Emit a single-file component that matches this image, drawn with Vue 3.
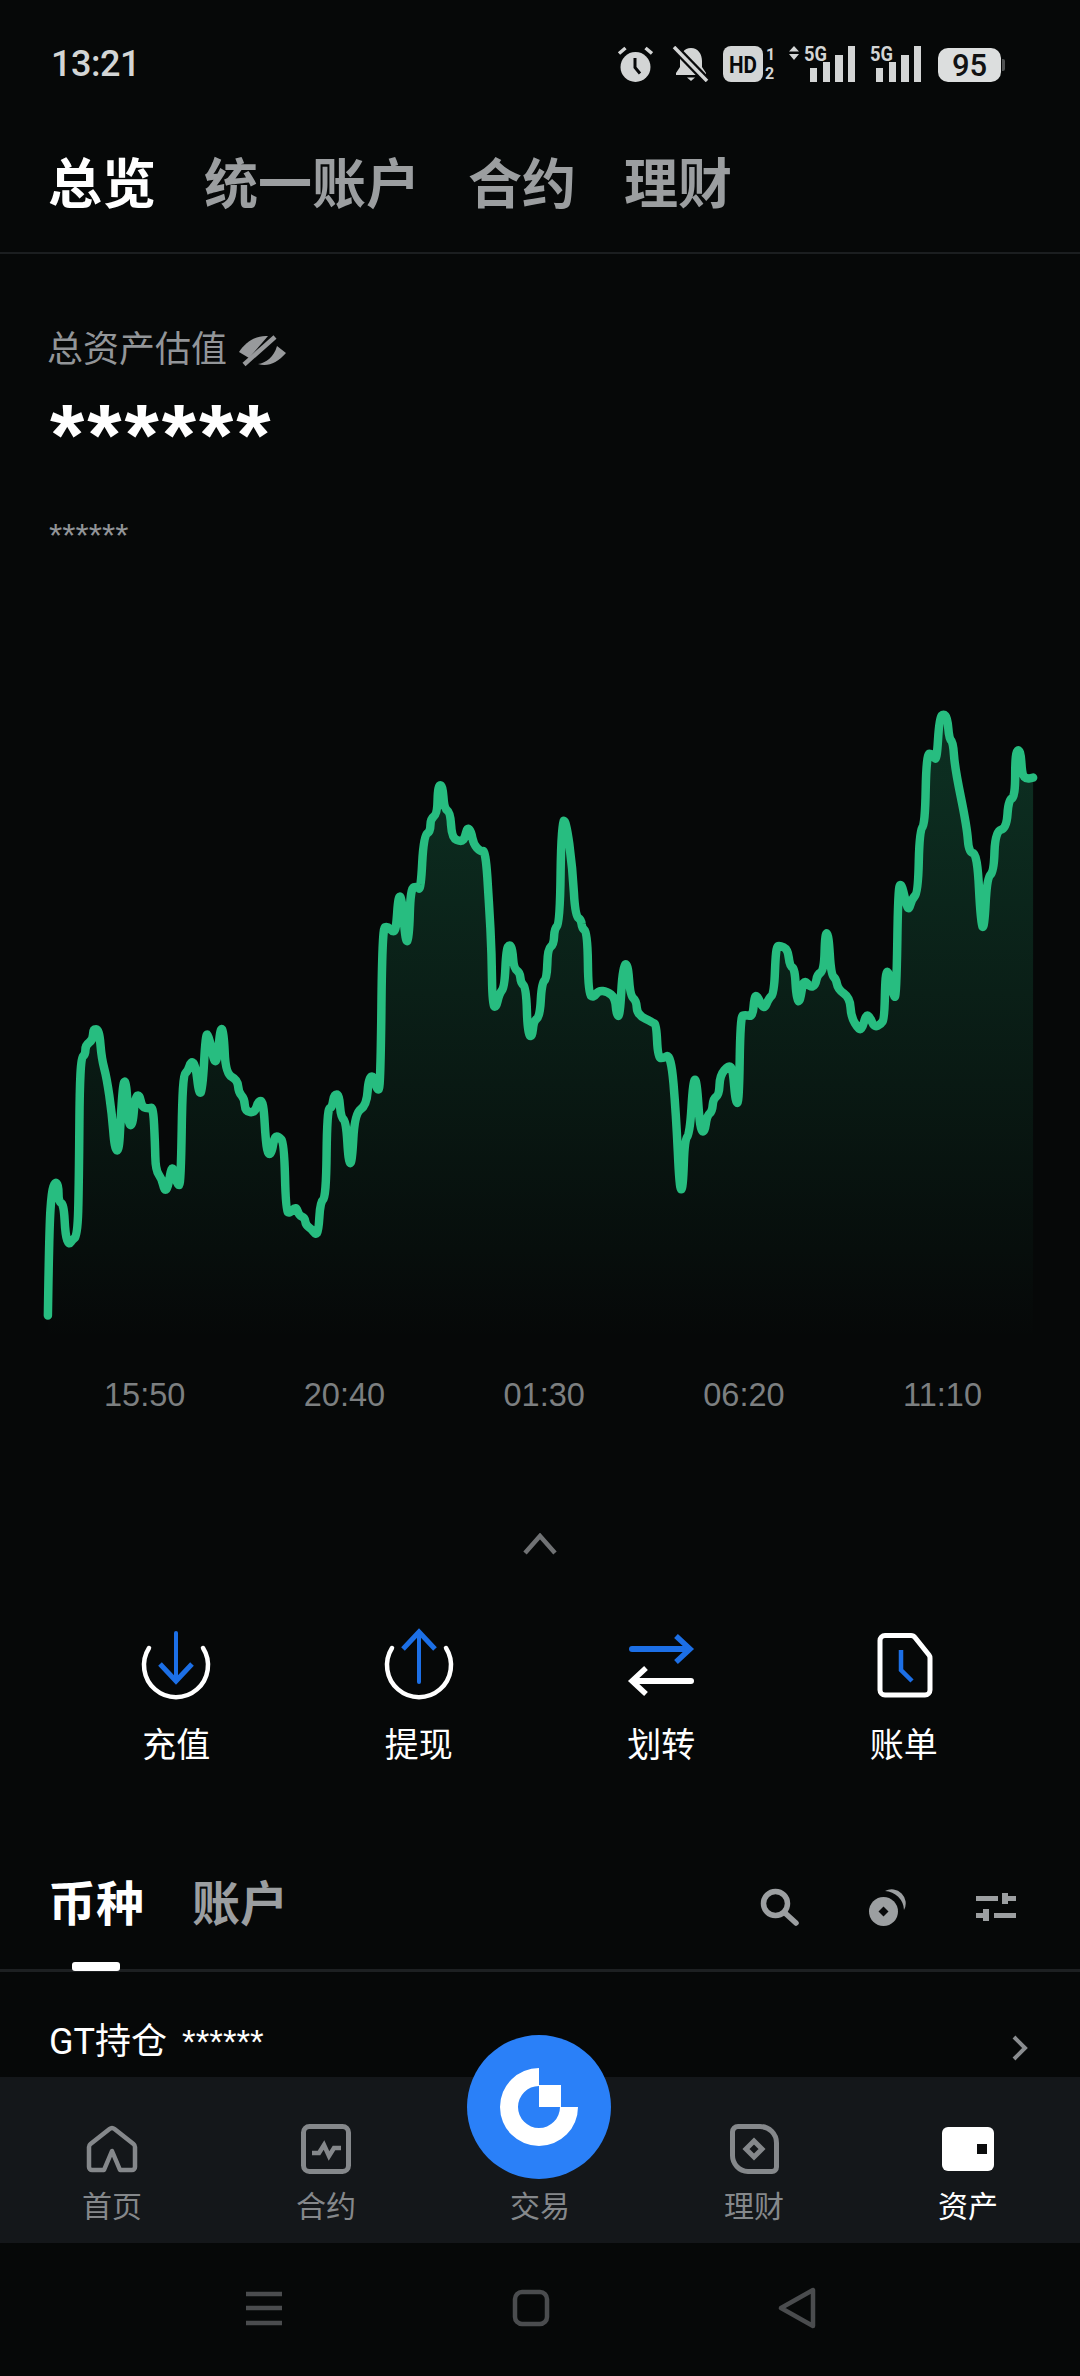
<template>
  <div class="page">
    <div class="content">
      <div class="status-bar">
        <span class="time">13:21</span>
        <div class="status-icons">
          <svg width="36" height="36" viewBox="0 0 36 36">
            <circle cx="18.500" cy="21" r="15" fill="#d3d5d5" />
            <path d="M2 7.500 8.500 2M35 7.500 28.500 2" stroke="#d3d5d5" stroke-width="3.500" />
            <path d="M18 12v9.500l5 6" fill="none" stroke="#08090a" stroke-width="3" />
          </svg>
          <svg width="42" height="36" viewBox="0 0 42 36">
            <path d="M24 2c7 0 11 6 11 13v6l4 6v2H9v-2l4-6v-6c0-7 4-13 11-13z" fill="#d3d5d5" />
            <path d="M20 31.500h8l-4 3.500z" fill="#d3d5d5" />
            <path d="M7 1l33 34" stroke="#08090a" stroke-width="8" />
            <path d="M7 1l33 34" stroke="#d3d5d5" stroke-width="3.500" />
          </svg>
          <svg width="52" height="36" viewBox="0 0 52 36">
            <rect width="40" height="36" rx="8" fill="#d3d5d5" />
            <text x="6" y="27" class="hd" textLength="28" lengthAdjust="spacingAndGlyphs">HD</text>
            <text x="43" y="14" class="sim-no">1</text>
            <text x="42" y="33" class="sim-no">2</text>
          </svg>
          <svg width="67" height="40" viewBox="0 -4 67 40" fill="#d3d5d5">
            <path d="M5 0l5 5.500H0zM5 14l5-6H0z" />
            <text x="15" y="15" class="five-g" textLength="23" lengthAdjust="spacingAndGlyphs">5G</text>
            <rect x="21" y="22" width="7" height="14" />
            <rect x="34" y="16" width="7" height="20" />
            <rect x="46" y="9" width="8" height="27" />
            <rect x="59" width="7" height="36" />
          </svg>
          <svg width="52" height="40" viewBox="0 -4 52 40" fill="#d3d5d5">
            <text x="0" y="15" class="five-g" textLength="23" lengthAdjust="spacingAndGlyphs">5G</text>
            <rect x="6" y="22" width="7" height="14" />
            <rect x="19" y="16" width="7" height="20" />
            <rect x="31" y="9" width="8" height="27" />
            <rect x="44" width="7" height="36" />
          </svg>
          <div class="battery">95</div>
        </div>
      </div>

      <div class="top-tabs">
        <span v-for="(tab, i) in topTabs" :key="tab" class="top-tab" :class="{ active: i === 0 }">{{ tab }}</span>
      </div>

      <div class="summary">
        <div class="summary-label">
          <span>总资产估值</span>
          <svg width="64" height="50" viewBox="0 0 64 50" fill="#989a9c">
            <path d="M9 27C16 16 27 10 38 11L19 33z" />
            <path d="M47 21l9 7c-9 10-18 14-28 11 8-1 16-7 19-18z" />
            <path d="M14 39.500 45 12" stroke="#989a9c" stroke-width="4.500" />
          </svg>
        </div>
        <div class="summary-value">******</div>
        <div class="summary-sub">******</div>
      </div>

      <svg class="chart" width="1080" height="640" viewBox="0 700 1080 640">
        <defs>
          <linearGradient id="chartFill" gradientUnits="userSpaceOnUse" x1="0" y1="780" x2="0" y2="1340">
            <stop offset="0" stop-color="#26c281" stop-opacity="0.2" />
            <stop offset="1" stop-color="#26c281" stop-opacity="0" />
          </linearGradient>
        </defs>
        <path :d="areaPath" fill="url(#chartFill)" />
        <path :d="linePath" fill="none" stroke="#27bd80" stroke-width="8.500" stroke-linecap="round" stroke-linejoin="round" />
      </svg>

      <div class="chart-times">
        <span v-for="t in times" :key="t">{{ t }}</span>
      </div>

      <div class="collapse">
        <svg width="36" height="22" viewBox="0 0 36 22">
          <path d="M3 20 18 3l15 17" fill="none" stroke="#707274" stroke-width="4.500" />
        </svg>
      </div>

      <div class="actions">
        <div class="action">
          <svg width="80" height="80" viewBox="0 0 80 80">
            <path d="M13 23A32 32 0 1 0 67 23" fill="none" stroke="#fff" stroke-width="4.500" stroke-linecap="round" />
            <path d="M40 8v48" stroke="#1c6fe6" stroke-width="4" stroke-linecap="round" />
            <path d="M24 39l16 17 16-17" fill="none" stroke="#1c6fe6" stroke-width="5" />
          </svg>
          <span>充值</span>
        </div>
        <div class="action">
          <svg width="80" height="80" viewBox="0 0 80 80">
            <path d="M13 23A32 32 0 1 0 67 23" fill="none" stroke="#fff" stroke-width="4.500" stroke-linecap="round" />
            <path d="M40 8v49" stroke="#1c6fe6" stroke-width="4" stroke-linecap="round" />
            <path d="M24 24 40 7l16 17" fill="none" stroke="#1c6fe6" stroke-width="5" />
          </svg>
          <span>提现</span>
        </div>
        <div class="action">
          <svg width="80" height="80" viewBox="0 0 80 80">
            <path d="M11 24h56" stroke="#1c6fe6" stroke-width="6" stroke-linecap="round" />
            <path d="M55 11l14 13-14 13" fill="none" stroke="#1c6fe6" stroke-width="5.500" />
            <path d="M70 56H14" stroke="#fff" stroke-width="6" stroke-linecap="round" />
            <path d="M25 43 11 56l14 13" fill="none" stroke="#fff" stroke-width="5.500" />
          </svg>
          <span>划转</span>
        </div>
        <div class="action">
          <svg width="80" height="80" viewBox="0 0 80 80">
            <path d="M21 10.500H47a5 5 0 0 1 4 2L65 30a5 5 0 0 1 1 3V65a5 5 0 0 1-5 5H21a5 5 0 0 1-5-5V15.500a5 5 0 0 1 5-5z" fill="none" stroke="#fff" stroke-width="5" />
            <path d="M37 25v20l11 11" fill="none" stroke="#1c6fe6" stroke-width="4.500" />
          </svg>
          <span>账单</span>
        </div>
      </div>

      <div class="asset-bar">
        <div class="asset-tabs">
          <span class="asset-tab active">币种</span>
          <span class="asset-tab">账户</span>
        </div>
        <div class="asset-tools">
          <svg width="42" height="42" viewBox="0 0 42 42">
            <circle cx="16.500" cy="15.500" r="12" fill="none" stroke="#9c9fa1" stroke-width="5.500" />
            <path d="M26 25l11 10" stroke="#9c9fa1" stroke-width="5.500" stroke-linecap="round" />
          </svg>
          <svg width="42" height="42" viewBox="0 0 42 42">
            <path d="M18 3A14 14 0 0 1 37 22 20 20 0 0 0 18 3z" fill="#9c9fa1" />
            <circle cx="16.500" cy="23.500" r="14.500" fill="#9c9fa1" />
            <path d="M16.500 18.500l5 5-5 5-5-5z" fill="#08090a" />
          </svg>
          <svg width="42" height="42" viewBox="0 0 42 42" fill="#9c9fa1">
            <rect x="1" y="8" width="22" height="5" />
            <rect x="27" y="5" width="6" height="11" />
            <rect x="33" y="8" width="8" height="5" />
            <rect x="1" y="25" width="7" height="5" />
            <rect x="8" y="21" width="6" height="12" />
            <rect x="19" y="25" width="22" height="5" />
          </svg>
        </div>
      </div>

      <div class="holding">
        <span>GT持仓</span>
        <span class="holding-value">******</span>
        <svg class="holding-arrow" width="20" height="28" viewBox="0 0 20 28">
          <path d="M4 3l11 11L4 25" fill="none" stroke="#8a8d90" stroke-width="4" />
        </svg>
      </div>
    </div>

    <div class="tab-bar">
      <div class="trade-button">
        <svg width="144" height="144" viewBox="0 0 144 144">
          <path d="M72 33A39 39 0 1 0 111 72H93A21 21 0 1 1 72 51z" fill="#fff" />
          <rect x="72" y="50" width="22" height="22" fill="#fff" />
        </svg>
      </div>
      <div class="tab-item">
        <svg width="60" height="52" viewBox="0 0 60 52">
          <path d="M22 47H10a3 3 0 0 1-3-3V24a4 4 0 0 1 1.500-3l19-15a4 4 0 0 1 5 0l19 15a4 4 0 0 1 1.500 3v20a3 3 0 0 1-3 3H38l-8-19z" fill="none" stroke="#85888b" stroke-width="4.500" stroke-linejoin="round" />
        </svg>
        <span>首页</span>
      </div>
      <div class="tab-item">
        <svg width="60" height="52" viewBox="0 0 60 52">
          <rect x="7.500" y="3.500" width="45" height="45" rx="6" fill="none" stroke="#85888b" stroke-width="5" />
          <path d="M16 30h7l5-8 5 11 5-8h7" fill="none" stroke="#85888b" stroke-width="4.500" />
        </svg>
        <span>合约</span>
      </div>
      <div class="tab-item">
        <div class="tab-spacer"></div>
        <span>交易</span>
      </div>
      <div class="tab-item">
        <svg width="60" height="52" viewBox="0 0 60 52">
          <path d="M14 3.500h22A16.500 16.500 0 0 1 52.500 20v24a4.500 4.500 0 0 1-4.500 4.500H24A16 16 0 0 1 8.500 32V9A5.500 5.500 0 0 1 14 3.500z" fill="none" stroke="#85888b" stroke-width="5" />
          <path d="M30 18l8 8-8 8-8-8z" fill="none" stroke="#85888b" stroke-width="5" />
        </svg>
        <span>理财</span>
      </div>
      <div class="tab-item active">
        <svg width="60" height="52" viewBox="0 0 60 52">
          <rect x="4" y="4" width="52" height="44" rx="6" fill="#fff" />
          <rect x="39" y="21" width="10" height="10" fill="#0b0c0d" />
        </svg>
        <span>资产</span>
      </div>
    </div>

    <div class="nav-bar">
      <svg width="38" height="38" viewBox="0 0 38 38">
        <path d="M1 5h36M1 19h36M1 34h36" stroke="#4a4c4e" stroke-width="4.500" />
      </svg>
      <svg width="38" height="38" viewBox="0 0 38 38">
        <rect x="3" y="3" width="32" height="32" rx="7" fill="none" stroke="#4a4c4e" stroke-width="4.500" />
      </svg>
      <svg width="38" height="42" viewBox="0 0 38 42">
        <path d="M35 3v36L3 21z" fill="none" stroke="#4a4c4e" stroke-width="4.500" stroke-linejoin="round" />
      </svg>
    </div>
  </div>
</template>

<script setup>
const topTabs = ['总览', '统一账户', '合约', '理财']
const times = ['15:50', '20:40', '01:30', '06:20', '11:10']

// price line, traced from the left and right half of the chart
const leftHalf = [
  [139, 1510], [143, 1300], [150, 1215], [160, 1192], [170, 1200], [170, 1240], [185, 1245], [190, 1320],
  [200, 1342], [210, 1330], [225, 1320], [229, 1200], [232, 900], [248, 890], [248, 868], [270, 855],
  [270, 830], [288, 830], [295, 900], [310, 945], [325, 1030], [333, 1115], [345, 1120], [350, 1050],
  [358, 950], [368, 960], [372, 1055], [385, 1060], [392, 990], [405, 985], [412, 1015], [432, 1018],
  [445, 1015], [450, 1100], [452, 1165], [470, 1185], [478, 1215], [488, 1205], [498, 1155], [508, 1170],
  [515, 1200], [525, 1200], [530, 940], [545, 930], [555, 905], [568, 915], [578, 985], [588, 975],
  [597, 840], [607, 845], [622, 910], [632, 900], [640, 825], [650, 835], [655, 935], [690, 950],
  [693, 980], [710, 995], [712, 1025], [740, 1028], [750, 1000], [765, 1000], [772, 1100], [780, 1130],
  [790, 1120], [797, 1085], [810, 1085], [825, 1100], [830, 1260], [840, 1268], [860, 1250], [868, 1272],
  [885, 1278], [888, 1295], [905, 1305], [917, 1318], [925, 1310], [930, 1240], [947, 1230], [950, 1020],
  [965, 1015], [970, 985], [985, 985], [990, 1040], [1005, 1048], [1012, 1145], [1022, 1150], [1030, 1030],
  [1065, 1010], [1070, 945], [1085, 940], [1095, 975], [1105, 970], [1110, 590], [1125, 585], [1140, 598],
  [1150, 595], [1157, 510], [1168, 520], [1178, 625], [1188, 615], [1192, 495], [1210, 490], [1222, 500],
  [1230, 370], [1250, 360], [1250, 330], [1270, 318], [1272, 250], [1285, 250], [1290, 305], [1308, 315],
  [1312, 375], [1340, 385], [1350, 375], [1357, 350], [1368, 360], [1375, 390], [1395, 408], [1410, 405],
  [1420, 530], [1428, 650], [1430, 770], [1440, 780], [1450, 745], [1465, 730], [1470, 640], [1480, 628],
  [1488, 640], [1492, 685], [1510, 695], [1512, 720], [1528, 730], [1532, 840], [1545, 850], [1550, 810],
  [1568, 800]
]
const rightHalf = [
  [5, 720], [20, 710], [22, 640], [40, 628], [42, 590], [58, 578], [62, 340], [75, 330], [95, 450],
  [102, 560], [120, 570], [122, 590], [138, 600], [140, 745], [155, 755], [170, 738], [195, 740], [218, 755],
  [222, 795], [232, 800], [240, 680], [255, 672], [262, 750], [280, 762], [282, 795], [330, 815], [338, 820],
  [342, 895], [355, 900], [380, 888], [395, 1030], [405, 1210], [415, 1210], [420, 1090], [435, 1080],
  [445, 950], [455, 950], [465, 1070], [478, 1075], [485, 1035], [500, 1025], [503, 995], [520, 985],
  [522, 940], [548, 915], [560, 925], [568, 1005], [578, 1005], [582, 800], [595, 795], [618, 800],
  [622, 755], [630, 748], [650, 785], [665, 755], [680, 745], [685, 635], [695, 630], [720, 640], [725, 680],
  [740, 685], [745, 760], [755, 765], [765, 710], [785, 730], [800, 725], [805, 700], [825, 690], [828, 600],
  [838, 605], [845, 700], [860, 710], [865, 735], [900, 755], [903, 800], [925, 830], [935, 830], [947, 795],
  [958, 800], [970, 825], [990, 818], [1000, 805], [1003, 695], [1012, 692], [1025, 750], [1035, 755],
  [1040, 490], [1050, 485], [1060, 520], [1070, 550], [1080, 520], [1098, 505], [1102, 355], [1118, 345],
  [1122, 175], [1140, 175], [1152, 195], [1160, 90], [1172, 80], [1183, 90], [1188, 140], [1200, 148],
  [1205, 210], [1240, 350], [1245, 410], [1270, 412], [1280, 580], [1290, 592], [1298, 470], [1318, 455],
  [1322, 360], [1355, 352], [1360, 285], [1380, 278], [1380, 170], [1395, 165], [1400, 225], [1412, 235],
  [1432, 232]
]

const toPage = (offset) => ([x, y]) => [+(x / 2.904 + offset).toFixed(1), +(y / 2.376 + 680).toFixed(1)]
const points = [...leftHalf.map(toPage(0)), ...rightHalf.map(toPage(540))]

// rounds the corners: each point becomes a control point between two midpoints
let linePath = `M${points[0][0]} ${points[0][1]}`
for (let i = 1; i < points.length - 1; i++) {
  const [x, y] = points[i]
  const [nx, ny] = points[i + 1]
  linePath += `Q${x} ${y} ${((x + nx) / 2).toFixed(1)} ${((y + ny) / 2).toFixed(1)}`
}
const last = points[points.length - 1]
linePath += `L${last[0]} ${last[1]}`

const areaPath = `${linePath}V1340H${points[0][0]}Z`
</script>

<style scoped>
.page {
  position: relative;
  width: 1080px;
  height: 2376px;
  display: flex;
  flex-direction: column;
  overflow: hidden;
  background: #060808;
  color: #fff;
  font-family: Roboto, "Noto Sans CJK SC", sans-serif;
}

.content {
  flex: 1;
  min-height: 0;
  overflow: hidden;
}

.status-bar {
  height: 128px;
  padding: 0 76px 0 51px;
  display: flex;
  align-items: center;
  justify-content: space-between;
}

.time {
  font-size: 36px;
  font-weight: 500;
  letter-spacing: -0.5px;
  color: #d3d5d5;
}

.status-icons {
  display: flex;
  align-items: flex-end;
  gap: 14px;
  padding-bottom: 4px;
}

.hd {
  font: 700 24px Roboto, sans-serif;
  fill: #08090a;
}

.sim-no {
  font: 700 16px Roboto, sans-serif;
  fill: #d3d5d5;
}

.five-g {
  font: 700 21px Roboto, sans-serif;
}

.battery {
  position: relative;
  width: 63px;
  height: 34px;
  margin: 0 3px 0 2px;
  border-radius: 10px;
  background: #dcdede;
  color: #111213;
  font-size: 31px;
  font-weight: 500;
  line-height: 35px;
  text-align: center;
}

.battery::after {
  content: "";
  position: absolute;
  top: 11px;
  right: -4px;
  width: 3px;
  height: 12px;
  border-radius: 0 2px 2px 0;
  background: #4f5152;
}

.top-tabs {
  height: 126px;
  padding: 2px 0 22px 48px;
  box-sizing: border-box;
  display: flex;
  gap: 48px;
  align-items: center;
  border-bottom: 2px solid #1b1e20;
}

.top-tab {
  font-size: 54px;
  font-weight: 700;
  color: #9b9ea0;
}

.top-tab.active {
  color: #fff;
}

.summary {
  height: 446px;
  padding: 73px 0 0 47px;
  box-sizing: border-box;
}

.summary-label {
  height: 46px;
  display: flex;
  align-items: center;
  font-size: 36px;
  line-height: 46px;
  color: #929598;
}

.summary-label svg {
  margin-left: 3px;
}

.summary-value {
  margin: 14px 0 0 3px;
  height: 95px;
  font: 700 88px/95px "Liberation Sans", sans-serif;
  letter-spacing: 3px;
  color: #fff;
}

.summary-sub {
  margin: 37px 0 0 2px;
  font: 400 34px/32px "Liberation Sans", sans-serif;
  color: #929598;
}

.chart {
  display: block;
}

.chart-times {
  height: 110px;
  padding: 15px 98px 0 104px;
  box-sizing: border-box;
  display: flex;
  justify-content: space-between;
  align-items: flex-start;
  font: 400 32.500px/80px "Liberation Sans", sans-serif;
  color: #7c7f80;
}

.collapse {
  height: 175px;
  padding-top: 83px;
  box-sizing: border-box;
  display: flex;
  justify-content: center;
}

.actions {
  display: grid;
  grid-template-columns: repeat(4, 242.5px);
  padding-left: 55px;
}

.action {
  display: flex;
  flex-direction: column;
  align-items: center;
}

.action span {
  margin-top: 17px;
  font-size: 34px;
  line-height: 46px;
}

.asset-bar {
  height: 204px;
  padding: 107px 63px 0 48px;
  box-sizing: border-box;
  display: flex;
  justify-content: space-between;
  border-bottom: 3px solid #1d2022;
}

.asset-tabs {
  display: flex;
  gap: 48px;
}

.asset-tab {
  position: relative;
  height: 60px;
  font-size: 48px;
  line-height: 60px;
  font-weight: 700;
  color: #9b9ea0;
}

.asset-tab.active {
  color: #fff;
}

.asset-tab.active::after {
  content: "";
  position: absolute;
  left: 24px;
  bottom: -36px;
  width: 48px;
  height: 9px;
  border-radius: 3px;
  background: #fff;
}

.asset-tools {
  display: flex;
  gap: 66px;
  padding-top: 13px;
}

.holding {
  height: 138px;
  padding: 3px 50px 0 49px;
  box-sizing: border-box;
  display: flex;
  align-items: baseline;
  line-height: 135px;
  font-size: 36px;
}

.holding-value {
  margin-left: 15px;
  font: 400 35px "Liberation Sans", sans-serif;
}

.holding-arrow {
  margin-left: auto;
  align-self: center;
  margin-top: 10px;
}

.tab-bar {
  position: relative;
  height: 166px;
  padding: 46px 5px 0;
  box-sizing: border-box;
  display: grid;
  grid-template-columns: repeat(5, 214px);
  background: #14171a;
}

.trade-button {
  position: absolute;
  left: 467px;
  top: -42px;
  width: 144px;
  height: 144px;
  border-radius: 50%;
  background: #2a80f8;
}

.tab-item {
  display: flex;
  flex-direction: column;
  align-items: center;
  font-size: 30px;
  color: #85888b;
}

.tab-item.active {
  color: #fff;
}

.tab-item span {
  margin-top: 12px;
  line-height: 40px;
}

.tab-spacer {
  height: 52px;
}

.nav-bar {
  height: 133px;
  padding: 0 264px 4px 245px;
  box-sizing: border-box;
  display: flex;
  justify-content: space-between;
  align-items: center;
}
</style>
